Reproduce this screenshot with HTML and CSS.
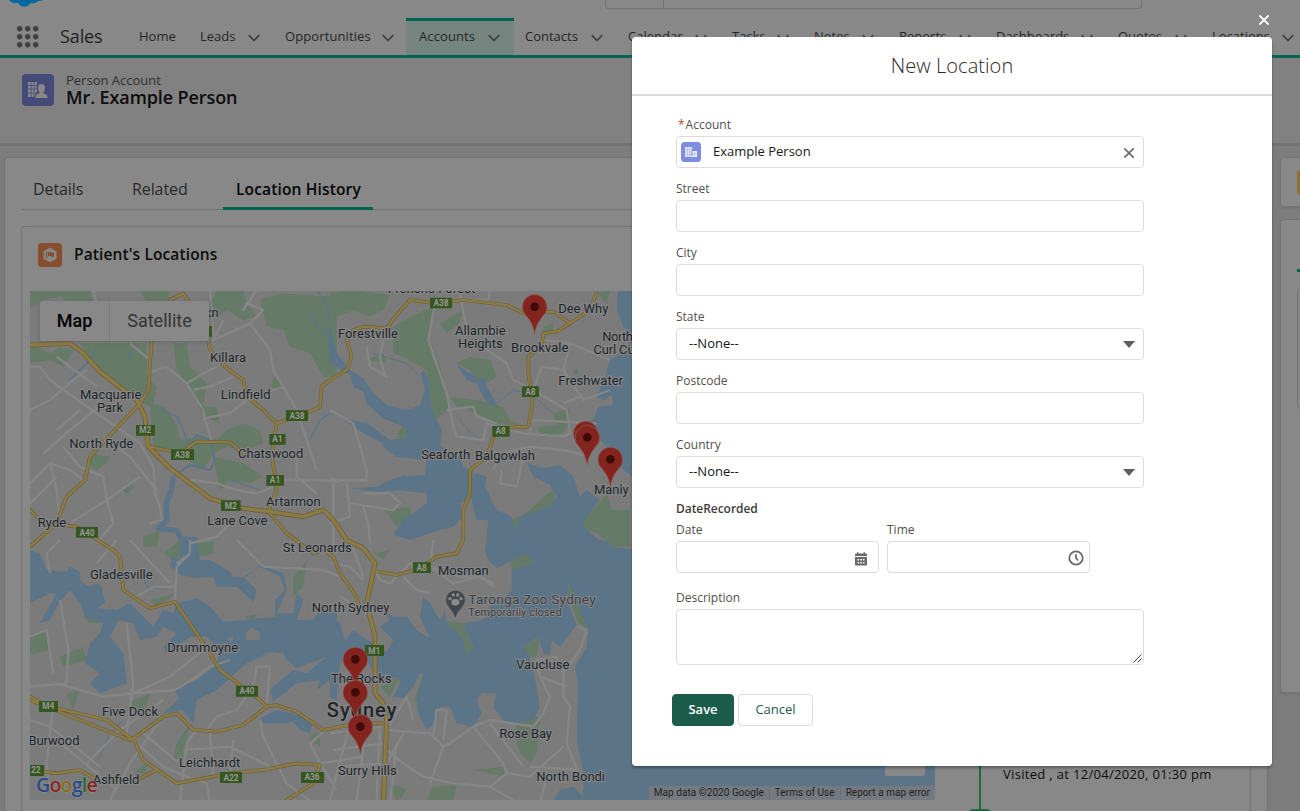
FILE: index.html
```html
<!DOCTYPE html>
<html lang="en">
<head>
<meta charset="utf-8">
<title>New Location</title>
<link rel="stylesheet" href="styles.css">
</head>
<body>
<svg width="0" height="0" class="defs">
  <symbol id="chev" viewBox="0 0 12 8"><path d="M.8 1.2 6 6.6l5.200-5.400" fill="none" stroke="currentColor" stroke-width="1.700"/></symbol>
  <symbol id="x" viewBox="0 0 12 12"><path d="M1.300 1.300l9.400 9.400M10.700 1.300l-9.400 9.400" fill="none" stroke="currentColor" stroke-width="1.800"/></symbol>
</svg>
<div class="app">
  <header class="top">
    <div class="utility">
      <svg class="cloud" width="36" height="8" viewBox="9 0 36 8"><path d="M9 0Q12 4 18 2.800Q20 7 25 6.800Q29 6 30 3.200Q36 4 38 1Q41 1 43 0Z" fill="#006a9e"/></svg>
      <div class="search"></div>
    </div>
    <nav class="nav">
      <svg class="waffle" width="22" height="22" viewBox="0 0 22 22" fill="#414141"><circle cx="2.700" cy="2.700" r="2.700"/><circle cx="10.700" cy="2.700" r="2.700"/><circle cx="18.700" cy="2.700" r="2.700"/><circle cx="2.700" cy="10.700" r="2.700"/><circle cx="10.700" cy="10.700" r="2.700"/><circle cx="18.700" cy="10.700" r="2.700"/><circle cx="2.700" cy="18.700" r="2.700"/><circle cx="10.700" cy="18.700" r="2.700"/><circle cx="18.700" cy="18.700" r="2.700"/></svg>
      <span class="appname">Sales</span>
      <div class="item home"><span>Home</span></div>
      <div class="item leads"><span>Leads</span><svg><use href="#chev"/></svg></div>
      <div class="item opps"><span>Opportunities</span><svg><use href="#chev"/></svg></div>
      <div class="item accounts"><span>Accounts</span><svg><use href="#chev"/></svg></div>
      <div class="item contacts"><span>Contacts</span><svg><use href="#chev"/></svg></div>
      <div class="item calendar"><span>Calendar</span><svg><use href="#chev"/></svg></div>
      <div class="item tasks"><span>Tasks</span><svg><use href="#chev"/></svg></div>
      <div class="item notes"><span>Notes</span><svg><use href="#chev"/></svg></div>
      <div class="item reports"><span>Reports</span><svg><use href="#chev"/></svg></div>
      <div class="item dashboards"><span>Dashboards</span><svg><use href="#chev"/></svg></div>
      <div class="item quotes"><span>Quotes</span><svg><use href="#chev"/></svg></div>
      <div class="item locations"><span>Locations</span><svg><use href="#chev"/></svg></div>
    </nav>
  </header>
  <section class="record">
    <svg width="32" height="32" viewBox="0 0 32 32"><rect width="32" height="32" rx="4" fill="#454b78"/><path d="M6 8h9v15H6z" fill="#888"/><path d="M9 8v15M12 8v15M6 11.500h9M6 15h9M6 19h9" stroke="#454b78" stroke-width=".8"/><path d="M12.500 25v-3q0-2 4-3.500-2-2-2-5 0-4.500 5-4.500t5 4.500q0 3-2 5 4 1.500 4 3.500v3z" fill="#454b78"/><path d="M13.500 24v-1.500q0-2 4.500-3.500-2-2-2-5 0-4 3.500-4t3.500 4q0 3-2 5 4.500 1.500 4.500 3.500V24z" fill="#888"/></svg>
    <div class="who"><div class="kind">Person Account</div><h1>Mr. Example Person</h1></div>
  </section>
  <main class="cols">
    <section class="card main">
      <div class="tabs"><span class="t1">Details</span><span class="t2">Related</span><span class="t3">Location History</span></div>
      <div class="panes">
        <section class="mapcard">
          <div class="maphead">
            <svg width="24" height="24" viewBox="0 0 24 24"><rect width="24" height="24" rx="3.500" fill="#864e2d"/><path d="M12 4.500l6.500 3.700v7.600L12 19.500l-6.500-3.700V8.200z" fill="#888"/><path d="M8.500 8.500v7" stroke="#864e2d" stroke-width="1.200"/><path d="M10 9h2.500l1 .8H16v4h-2.500l-1-.8H10z" fill="#864e2d"/></svg>
            <h2>Patient's Locations</h2>
          </div>
          <div class="map">
            <svg class="tiles" viewBox="0 3 2715 1527">
              <defs>
                <g id="pin"><path d="M0 0C-4-28-12-39-25-56A37 37 0 1 1 25-56C12-39 4-28 0 0Z" fill="#83241e" stroke="#94625c" stroke-width="2"/><circle cy="-84" r="13" fill="#3f0b0a"/></g>
                <path id="motorway" d="M0 165L120 160 160 190 210 245 320 330 345 380 355 470 420 535 540 625 640 655 720 665 820 680 880 660 910 690 950 750 1000 775 1035 820 1025 870 1010 940 1035 1040 1035 1210 1060 1240 1070 1290 1060 1540"/>
                <path id="arterial" d="M365 150L355 300 330 340 180 500 165 570 110 620 80 700 0 770M360 470L450 490 500 455 600 457 650 500M530 130L540 180 590 235 640 270 650 320 700 360 740 400 725 490 740 600 715 665M740 400L830 370 870 350 875 290 900 270 950 240 965 200 950 150 970 120 1000 110 1070 115 1095 80 1140 30 1220 40 1300 30 1430 45 1480 70 1570 65 1620 100 1680 60 1700 10M1620 100L1580 125 1540 130 1535 170 1495 200 1495 250 1508 340 1495 410 1400 415 1370 500 1320 540 1320 610 1300 660 1300 750 1280 790 1220 800 1170 835 1100 855 1045 845M720 670L770 730 850 790 880 780 910 800 930 850 980 920 985 940M0 660L40 700 140 710 250 780 270 800 280 900 360 955 435 935 520 1060 570 1140 690 1230 710 1250 740 1245 800 1265 880 1320 980 1300 1060 1300M420 30L460 10 480 40M710 1250L640 1305 560 1325 490 1320 440 1270 400 1280 310 1345 340 1410 440 1480 600 1450 700 1440 800 1420 870 1425 850 1480 770 1530M0 1220L60 1250 230 1290 310 1350M0 1230L100 1270 300 1350M0 1440L80 1450 150 1440 200 1470 320 1470 380 1440"/>
              </defs>
              <rect width="2715" height="1540" fill="#7b7b7b"/>
              <g fill="#667b67">
                <path d="M0 0H180L190 40 150 60 90 20 40 30 0 55ZM330 0H420L410 50 380 60 350 40ZM0 160L60 190 90 170 130 180 100 230 60 210 0 220ZM150 160L350 160 350 260 380 290 370 340 400 350 440 400 450 450 500 440 560 450 590 420 640 400 690 420 700 460 640 480 590 470 550 490 520 540 460 500 480 470 430 490 370 470 360 350 320 330 260 280 200 240ZM430 160L470 160 480 230 530 280 520 350 560 350 570 400 520 380 490 310 440 240ZM560 0L640 0 650 40 680 80 640 90 590 60 560 80 540 40ZM690 30L750 10 920 20 920 260 880 260 840 190 780 170 760 120 710 110ZM730 260L760 280 750 300 725 290ZM180 490L240 500 230 520 200 540 170 520ZM280 600L300 580 315 590 290 612ZM340 740L390 720 380 770 340 770ZM550 500L640 520 700 560 660 580 600 570 570 600ZM900 10L970 0 1080 15 1060 60 1020 80 970 60 920 80Z"/>
                <path d="M1090 110L1180 60 1210 50 1200 150 1230 230 1250 310 1260 350 1210 400 1200 340 1190 240 1120 200 1090 190ZM1230 100L1300 60 1290 100 1250 130ZM1280 220L1320 200 1380 210 1400 260 1350 290 1320 240ZM1260 320L1340 330 1420 350 1440 390 1480 410 1400 400 1340 370 1280 350ZM1120 400L1160 390 1180 430 1140 460 1100 440ZM1570 370L1620 355 1615 410 1580 410ZM1525 410L1610 405 1600 430 1530 440ZM1010 210L1060 190 1070 220ZM1060 660L1140 650 1150 690 1100 710 1080 680ZM1430 700L1500 660 1540 620 1570 600 1580 650 1520 670 1460 710 1455 730ZM1640 710L1690 660 1730 610 1745 660 1800 660 1800 770 1750 770 1700 730ZM1540 110L1570 100 1570 120 1540 130ZM1700 10L1740 0 1730 40ZM1630 240L1645 235 1645 250 1630 255Z"/>
                <path d="M0 1040L50 1020 60 1080 0 1095ZM90 1100L160 1070 170 1110 100 1130ZM160 980L220 970 210 1000 180 1000ZM110 1210L150 1200 130 1260ZM300 1235L360 1210 350 1250 310 1260ZM400 790L450 750 500 770 430 810ZM500 760L550 755 550 790 510 800ZM360 930L440 910 380 950ZM790 860L830 810 820 890 790 920ZM720 1050L790 1030 760 1070 730 1060ZM770 1100L820 1090 820 1110ZM640 980L690 970 660 990ZM440 1360L480 1300 460 1400 430 1410ZM310 1450L350 1420 350 1450ZM840 1330L870 1330 870 1370 840 1350ZM860 970L900 980 890 1030 860 1030ZM1030 790L1080 780 1060 810ZM1120 1020L1180 1010 1210 980 1240 990 1300 1000 1330 1080 1310 1100 1290 1040 1250 1000 1240 1000ZM1440 790L1520 790 1520 840 1450 880ZM1480 1070L1530 1040 1520 1100 1480 1110ZM1050 1190L1110 1160 1080 1220ZM1460 1290L1530 1280 1520 1390 1500 1420 1470 1390 1455 1340ZM1190 1530L1210 1490 1280 1485 1270 1530ZM1330 1440L1430 1430 1420 1460ZM1610 900L1620 880 1660 950 1670 1020 1640 990ZM1080 1480L1130 1500 1100 1540ZM1170 1180L1190 1170 1180 1230 1150 1240Z"/>
              </g>
              <g fill="#5b7487">
                <path d="M1765 0L1760 60 1780 110 1806 130 1790 180 1740 210 1725 260 1700 320 1720 330 1745 315 1750 345 1705 350 1690 390 1665 400 1700 440 1740 480 1770 530 1806 560 1840 620 1815 780 1750 770 1735 755 1700 745 1660 710 1670 680 1710 630 1670 600 1650 620 1630 560 1590 525 1540 535 1490 518 1510 560 1560 585 1580 620 1560 650 1510 665 1470 680 1455 720 1445 680 1400 660 1380 620 1365 590 1370 560 1335 550 1320 590 1325 630 1340 690 1375 690 1365 790 1375 810 1400 835 1450 810 1490 790 1510 820 1445 840 1445 900 1420 930 1380 950 1360 990 1300 1000 1330 1075 1310 1095 1295 1040 1250 1000 1245 960 1230 990 1200 940 1180 920 1170 980 1200 1045 1160 1020 1130 980 1090 980 1050 955 1080 990 1050 1010 1090 1050 1070 1085 1040 1080 1040 1180 1105 1160 1110 1180 1090 1220 1120 1225 1150 1190 1170 1150 1180 1150 1160 1230 1165 1270 1190 1320 1220 1290 1230 1250 1260 1250 1280 1300 1330 1310 1355 1270 1340 1230 1355 1210 1400 1210 1390 1250 1420 1290 1460 1300 1510 1290 1530 1250 1520 1190 1500 1100 1480 1070 1525 1040 1540 1090 1560 1095 1565 1050 1590 1070 1640 1005 1610 930 1615 880 1650 960 1675 1020 1670 1070 1635 1130 1645 1190 1640 1350 1660 1450 1660 1520 1630 1490 1590 1500 1565 1540 2715 1540V0Z"/>
                <path d="M895 120L900 110 920 190 960 240 1000 265 1030 310 1070 345 1130 360 1170 345 1185 300 1172 250 1180 240 1197 270 1200 340 1215 380 1235 420 1230 465 1260 490 1290 500 1300 530 1330 545 1330 620 1290 640 1300 680 1270 710 1230 720 1140 750 1090 735 1120 690 1190 640 1190 610 1100 600 1120 560 1185 555 1190 510 1100 500 1070 470 1130 445 1130 415 1060 385 1010 340 1000 305 970 290 960 255 900 220Z"/>
                <path d="M1280 225L1320 250 1350 270 1365 265 1370 290 1400 340 1400 350 1370 340 1340 280 1310 270Z"/>
                <path d="M930 380L1010 400 1080 450 1150 440 1190 470 1180 500 1080 490 1050 455 1000 430ZM960 595L1040 590 1080 570 1130 555 1110 600 1040 605Z"/>
                <path d="M0 780L30 790 50 840 110 845 120 830 150 845 150 870 175 890 205 880 215 890 225 940 200 955 260 960 300 940 340 980 370 1010 400 960 430 970 440 940 500 925 540 950 580 995 640 990 690 985 735 980 735 930 765 900 750 860 690 830 640 860 680 900 670 935 620 890 560 890 550 860 500 865 450 855 420 830 425 805 450 805 455 740 500 740 510 810 540 810 600 845 610 860 650 860 690 825 760 850 770 900 740 970 790 970 800 910 820 930 800 990 850 990 870 960 920 970 920 1130 890 1100 840 1120 800 1135 770 1110 760 1090 720 1085 650 1120 600 1165 560 1200 500 1230 490 1300 460 1260 400 1270 450 1225 430 1200 500 1170 560 1125 570 1080 530 1040 480 1040 410 1090 400 1070 440 1030 400 1010 380 1040 330 1050 310 1000 265 990 240 1040 280 1090 290 1180 210 1210 180 1180 210 1150 165 1120 180 1060 210 1030 220 1000 165 980 150 940 120 900 95 930 80 950 60 990 30 1000 80 910 60 910 0 940Z"/>
                <path d="M730 1235L800 1180 870 1170 860 1200 900 1170 920 1170 920 1120 890 1100 830 1150 790 1140 720 1200ZM690 1285L740 1260 790 1270 850 1290 840 1330 810 1320 790 1295 760 1300 700 1300Z"/>
                <path d="M900 975L930 1000 945 1050 970 1020 1010 1050 1040 1060V1160L1010 1110 960 1080 930 1120 920 1230 900 1220Z"/>
              </g>
              <g fill="#7b7b7b"><path d="M645 1030L665 1015 690 1025 690 1050 650 1050ZM590 1045L612 1040 605 1055Z"/></g>
              <g fill="none" stroke="#5b7487" stroke-width="13" stroke-linejoin="round">
                <path d="M430 560L425 600 408 640 412 690 385 715 440 722 460 760 458 790" stroke-width="16"/>
                <path d="M430 560L480 525 540 540 555 515 540 450 500 435 480 470" stroke-width="6"/>
                <path d="M480 470L455 410 440 380 380 350M840 70L860 110 900 130 910 200M120 270L190 200 200 170M310 170L300 200 280 215M840 450L870 390 900 370M600 570L690 600M900 100L890 40 860 0" stroke-width="4"/>
                <path d="M1030 190L1130 220 1170 260M1400 340L1450 300 1500 310 1570 370M1290 390L1320 430 1360 450M200 1420L240 1330 280 1290M410 900L350 890 340 860" stroke-width="3"/>
              </g>
              <g fill="none" stroke="#868686" stroke-width="7" stroke-linejoin="round">
                <path d="M190 0L200 40M0 230L30 230 60 270 200 370 330 460 370 530 375 610 390 650 395 690 360 700M0 360L60 330 130 270 170 240M80 200L200 290M80 420L150 360M0 580L60 520 120 540 160 570M40 490L120 420 220 340M0 640L80 560M120 700L230 630 330 560M60 520L80 600 90 700M220 440L300 500 380 600M100 470L150 530 220 560 230 630 250 700 200 760M350 250L410 230 470 280 520 360 525 390 545 450 550 460M470 280L540 240 560 230M490 300L540 290 610 260M540 0L545 60 550 150 660 100 700 60 650 40 640 60 680 0M550 150L580 90M300 160L360 210M660 100L720 180 730 240 800 360 830 450 860 540M520 385L600 370 650 330 760 290M480 570L560 580 620 600 680 610 730 590M760 570L860 570 930 575M800 490L800 560 860 610M600 700L560 740 480 760 480 780"/>
                <path d="M1213 50L1195 150 1250 310 1270 410 1280 440 1360 450 1370 400M1010 170L1020 230 1070 260 1060 240 1050 200 1060 150M1290 0L1300 70 1310 110M1380 0L1375 30 1320 30M1370 180L1430 220 1450 270 1510 300 1610 360 1620 430 1600 440 1480 430 1370 400M1510 300L1535 230 1600 240 1660 330 1740 300M1600 240L1620 160 1740 210M1620 160L1540 150M1600 340L1650 320M1390 540L1410 490 1500 470 1600 480 1680 500M1415 540L1410 580 1460 590 1480 500M900 360L970 400 1010 540 1010 570 900 570M910 570V780M950 575L960 680 900 700M960 640L1090 660 1110 640 1080 610 1000 610M1000 650L1015 700 1020 760M1210 750L1200 830 1290 860 1350 860 1390 890M1250 360L1330 350 1340 380 1400 400M1500 430L1500 390 1700 400"/>
                <path d="M480 750L480 790 440 830 435 930M440 890L370 890 320 920M300 750L420 880M200 820L260 750M90 750L50 790 60 850M90 930L115 1080 110 1180 0 1190M290 1000L310 1180 290 1330 300 1350M0 1040L50 1020 70 1150M80 1180L220 1220 310 1210 435 1200 500 1160 540 1130 600 1110M310 1210L420 1160 520 1080M70 1240L50 1420 60 1500M80 1350L260 1500M0 1290L60 1310 160 1390 210 1430M170 1420L270 1320 400 1230M310 1350L400 1430 470 1460 530 1480 540 1540M390 1290L300 1420 240 1530M340 1330L460 1430M500 1320L470 1360 450 1540M530 1320L560 1280 620 1260 670 1190 680 1130 720 1130 710 1240M540 1330L550 1460M460 1380L600 1370 720 1430M610 1350L600 1470M690 1290L700 1340 770 1480 850 1540M840 1360L870 1420 920 1500M840 1360L900 1310M620 750L660 790 700 830 880 840 930 860M480 790L440 820"/>
                <path d="M960 750L1000 860M900 820L960 830 1000 870M1000 960L930 920M1010 780L1050 870 1080 880 1140 820 1200 830 1270 880 1350 860 1390 880M1120 860L1160 900 1200 910M1070 1320L1200 1330 1240 1370 1260 1360 1330 1310 1380 1290 1510 1310 1540 1270 1560 1220 1530 1160 1520 1110 1580 1100 1600 1150 1650 1080 1670 1020 1640 1010M1600 1150L1600 1220 1620 1250 1610 1360 1650 1460M1530 1160L1610 1190M1330 1310L1420 1420 1430 1450 1500 1460 1600 1370M1430 1450L1380 1490 1270 1480 1180 1460 1120 1420 1070 1380M1240 1370L1200 1480M1120 1330L1070 1420M1070 1320L1130 1220 1150 1290M1500 1430L1650 1440M1380 1490L1450 1530M900 1330L1060 1310M910 1380L1060 1360M930 1430L1060 1420M1010 1300L980 1530M1050 1300L1040 1530M960 1300L900 1530M1100 1360L1080 1540M870 1420L1000 1400M1240 1350L1250 1260 1220 1260 1210 1340M1480 1430L1380 1300M1550 1460L1530 1540"/>
              </g>
              <g fill="none" stroke-linejoin="round" stroke-linecap="round">
                <g stroke="#6e6138"><use href="#motorway" stroke-width="15"/><use href="#arterial" stroke-width="11"/></g>
                <g stroke="#8c7b46"><use href="#motorway" stroke-width="10"/><use href="#arterial" stroke-width="7"/></g>
              </g>
              <g fill="#35561f">
                <path d="M318 405h57v32h-57zM423 478h69v32h-69zM768 361h66v32h-66zM718 432h49v32h-49zM709 555h53v32h-53zM573 631h59v32h-59zM138 711h66v32h-66zM500 108h46v32h-46zM1200 23h66v32h-66zM1476 289h51v32h-51zM1387 408h52v32h-52zM1149 817h54v32h-54zM1005 1065h57v33h-57zM618 1187h66v33h-66zM27 1233h57v33h-57zM0 1425h42v33H0zM570 1446h66v33h-66zM813 1446h69v33h-69z"/>
              </g>
              <g class="shield">
                <text x="346" y="430">M2</text><text x="457" y="503">A38</text><text x="801" y="386">A38</text><text x="742" y="457">A1</text><text x="735" y="580">A1</text><text x="602" y="657">M2</text><text x="171" y="737">A40</text><text x="1233" y="48">A38</text><text x="1501" y="314">A8</text><text x="1412" y="433">A8</text><text x="1175" y="842">A8</text><text x="1033" y="1091">M1</text><text x="651" y="1212">A40</text><text x="55" y="1258">M4</text><text x="17" y="1450">22</text><text x="603" y="1472">A22</text><text x="846" y="1469">A36</text>
              </g>
              <g class="place">
                <text x="549" y="82" textLength="34">on</text><text x="594" y="217" textLength="108">Killara</text><text x="242" y="328" textLength="184">Macquarie</text><text x="240" y="367" textLength="78">Park</text><text x="647" y="326" textLength="149">Lindfield</text><text x="214" y="475" textLength="192">North Ryde</text><text x="722" y="505" textLength="196">Chatswood</text><text x="790" y="647" textLength="164">Artarmon</text><text x="622" y="704" textLength="181">Lane Cove</text><text x="66" y="711" textLength="85">Ryde</text>
                <text x="1205" y="10" textLength="262">Frenchs Forest</text><text x="1014" y="143" textLength="180">Forestville</text><text x="1351" y="134" textLength="152">Allambie</text><text x="1351" y="173" textLength="134">Heights</text><text x="1529" y="185" textLength="172">Brookvale</text><text x="1660" y="68" textLength="150">Dee Why</text><text x="1763" y="154" textLength="92">North</text><text x="1763" y="193" textLength="145">Curl Curl</text><text x="1682" y="284" textLength="194">Freshwater</text><text x="1247" y="506" textLength="147">Seaforth</text><text x="1425" y="511" textLength="180">Balgowlah</text><text x="1744" y="611" textLength="104">Manly</text>
                <text x="274" y="866" textLength="188">Gladesville</text><text x="862" y="787" textLength="207">St Leonards</text><text x="962" y="965" textLength="233">North Sydney</text><text x="518" y="1086" textLength="213">Drummoyne</text><text x="300" y="1277" textLength="168">Five Dock</text><text x="72" y="1365" textLength="153">Burwood</text><text x="539" y="1430" textLength="184">Leichhardt</text><text x="258" y="1482" textLength="140">Ashfield</text><text x="1300" y="854" textLength="152">Mosman</text><text x="994" y="1178" textLength="182">The Rocks</text><text x="1538" y="1137" textLength="160">Vaucluse</text><text x="1487" y="1343" textLength="158">Rose Bay</text><text x="1012" y="1454" textLength="176">Surry Hills</text><text x="1622" y="1472" textLength="206">North Bondi</text>
                <text class="city" x="995" y="1281" textLength="209">Sydney</text>
              </g>
              <g class="poi"><path d="M1276 984C1270 960 1248 950 1248 930A28 28 0 0 1 1305 930C1305 950 1282 960 1276 984Z" fill="#42464d"/><g fill="#8a8a8a"><ellipse cx="1276" cy="937" rx="12" ry="10"/><circle cx="1260" cy="926" r="5"/><circle cx="1270" cy="915" r="5"/><circle cx="1283" cy="915" r="5"/><circle cx="1293" cy="926" r="5"/></g><text x="1315" y="943" textLength="382">Taronga Zoo Sydney</text><text class="small" x="1315" y="977" textLength="280">Temporarily closed</text></g>
              <use href="#pin" x="1514" y="134"/><use href="#pin" x="1667" y="514"/><use href="#pin" x="1672" y="526"/><use href="#pin" x="1741" y="592"/><use href="#pin" x="976" y="1192"/><use href="#pin" x="976" y="1291"/><use href="#pin" x="991" y="1394"/>
              <text class="google" x="18" y="1507"><tspan fill="#264a85">G</tspan><tspan fill="#852720">o</tspan><tspan fill="#867015">o</tspan><tspan fill="#264a85">g</tspan><tspan fill="#236b38">l</tspan><tspan fill="#852720">e</tspan></text>
            </svg>
            <div class="maptype"><span class="on">Map</span><span>Satellite</span></div>
            <div class="zoomctl"></div>
            <div class="attrib"><span>Map data ©2020 Google</span><span>Terms of Use</span><span>Report a map error</span></div>
          </div>
        </section>
        <section class="timeline"><div class="track"><i></i></div><p>Visited , at 12/04/2020, 01:30 pm</p></section>
      </div>
    </section>
    <aside class="side">
      <div class="card s1"><i></i></div>
      <div class="card s2"><i></i><b></b></div>
    </aside>
  </main>
</div>
<div class="layer">
  <svg class="close"><use href="#x"/></svg>
  <section class="modal">
    <h2 class="mtitle">New Location</h2>
    <form class="form">
      <label class="req"><em>*</em>Account</label>
      <div class="box lookup">
        <svg width="20" height="20" viewBox="0 0 20 20"><rect width="20" height="20" rx="3.500" fill="#7f8de1"/><path d="M4 5h7v10H4zM11 9h5v6h-5z" fill="#e8ebfb"/><path d="M6.300 5v10M8.700 5v10M4 7.500h7M4 10h7M4 12.500h7M13.500 10V14M11 12h5" stroke="#a6b0ea" stroke-width=".6"/><path d="M10.800 8.500V14" stroke="#7f8de1"/></svg>
        <span>Example Person</span><svg class="clear"><use href="#x"/></svg>
      </div>
      <label>Street</label><div class="box"></div>
      <label>City</label><div class="box"></div>
      <label>State</label><div class="box select"><span>--None--</span><i></i></div>
      <label>Postcode</label><div class="box"></div>
      <label>Country</label><div class="box select"><span>--None--</span><i></i></div>
      <div class="legend">DateRecorded</div>
      <div class="pair">
        <div><label>Date</label><div class="box cal"><svg width="12" height="14" viewBox="0 0 12 14"><path d="M0 2.500Q0 1.500 1 1.500H2V.3h1.500v1.200h5V.3H10v1.200h1q1 0 1 1V4H0zM0 5h12v7.500q0 1-1 1H1q-1 0-1-1z" fill="#6b6967"/><path d="M2.500 7h1.600v1.600H2.500zM5.200 7h1.600v1.600H5.200zM7.900 7h1.600v1.600H7.900zM2.500 10h1.600v1.600H2.500zM5.200 10h1.600v1.600H5.200zM7.900 10h1.600v1.600H7.900z" fill="#fff"/></svg></div></div>
        <div><label>Time</label><div class="box clock"><svg width="16" height="16" viewBox="0 0 16 16" fill="none" stroke="#6b6967" stroke-width="1.800"><circle cx="8" cy="8" r="6.700"/><path d="M8 4.200V8l2 2.500"/></svg></div></div>
      </div>
      <label class="desc">Description</label>
      <div class="box area"><svg width="9" height="9" viewBox="0 0 9 9" stroke="#444" stroke-width="1"><path d="M.5 8.500l8-8M4.500 8.500l4-4"/></svg></div>
      <div class="actions"><button type="button" class="save">Save</button><button type="button" class="cancel">Cancel</button></div>
    </form>
  </section>
</div>
</body>
</html>
```
FILE: styles.css
```css
* { box-sizing: border-box; }
body { margin: 0; width: 1300px; height: 811px; overflow: hidden; position: relative; background: #7d7d7d; font: 13px "Open Sans", "Noto Sans", sans-serif; color: #0c0c0c; }
h1, h2, p { margin: 0; }
.defs { position: absolute; }
.app { width: 1300px; height: 811px; overflow: hidden; }
.top { height: 58px; background: #888; border-bottom: 3px solid #006453; }
.utility { height: 18px; display: flex; padding-left: 9px; }
.cloud { flex: none; }
.search { width: 537px; height: 9px; margin-left: 560px; border: 1px solid #737373; border-top: 0; border-radius: 0 0 4px 4px; background: linear-gradient(#737373, #737373) 57px 0 / 1px 100% no-repeat; }
.nav { height: 37px; display: flex; align-items: center; }
.waffle { flex: none; margin-left: 17px; }
.appname { flex: none; width: 79px; margin: 0 0 1px 21px; font-size: 18px; color: #1f1f1f; letter-spacing: -.1px; }
.item { flex: none; height: 37px; display: flex; align-items: center; justify-content: space-between; padding-right: 25px; color: #262626; }
.item span { padding-bottom: 2px; }
.item svg { width: 12px; height: 8px; color: #414141; margin-top: 2px; }
.home { width: 61px; }
.leads { width: 85px; }
.opps { width: 121px; padding-right: 12px; letter-spacing: .1px; }
.accounts { width: 108px; padding: 0 14px 3px 13px; background: #76857f; border-top: 3px solid #006453; letter-spacing: .1px; }
.contacts { width: 114px; padding-left: 11px; }
.calendar { width: 104px; }
.tasks { width: 82px; }
.notes { width: 85px; }
.reports { width: 97px; }
.dashboards { width: 122px; }
.quotes { width: 94px; }
.locations { width: 107px; }
.record { height: 88px; display: flex; padding: 16px 22px; background: #818181; border-bottom: 3px solid #737373; }
.who { margin: -1px 0 0 12px; }
.kind { font-size: 13px; line-height: 14px; color: #2f2f2f; }
.record h1 { font-size: 18px; line-height: 20px; font-weight: 600; letter-spacing: -.1px; }
.cols { display: flex; gap: 12px; padding: 11px 0 0 4px; height: 665px; }
.card { background: #888; border: 1px solid #737373; border-radius: 4px; box-shadow: 0 2px 2px #747474; }
.main { flex: none; width: 1264px; height: 680px; padding: 12px 16px; }
.tabs { height: 40px; display: flex; border-bottom: 1px solid #737373; font-size: 16px; line-height: 39px; color: #292929; }
.t1 { width: 111px; padding-left: 12px; letter-spacing: -.1px; }
.t2 { width: 91px; letter-spacing: -.1px; }
.t3 { width: 150px; height: 40px; padding-left: 13px; font-weight: 600; color: #050505; border-bottom: 3px solid #006453; white-space: nowrap; font-size: 15.500px; letter-spacing: .15px; }
.panes { display: flex; margin-top: 16px; gap: 14px; }
.mapcard { flex: none; width: 922px; height: 620px; border: 1px solid #737373; border-right-color: transparent; border-radius: 4px; padding: 0 8px; }
.maphead { height: 64px; display: flex; align-items: center; padding: 0 8px 8px; gap: 12px; }
.maphead h2 { font-size: 15.500px; font-weight: 600; letter-spacing: .12px; padding-bottom: 2px; }
.map { position: relative; width: 905px; height: 509px; overflow: hidden; font-family: Roboto, sans-serif; }
.tiles { display: block; width: 905px; height: 509px; }
.place text { font: 400 39px Roboto, sans-serif; fill: #20252c; stroke: #858585; stroke-width: 7px; paint-order: stroke; text-anchor: middle; }
.place .city { font-size: 60px; font-weight: 500; }
.shield text { font: 700 25px Roboto, sans-serif; fill: #969696; text-anchor: middle; }
.poi text { font: 400 41px Roboto, sans-serif; fill: #3d4249; stroke: #858585; stroke-width: 6px; paint-order: stroke; }
.poi .small { font-size: 33px; }
.google { font: 600 59px "Open Sans", sans-serif; letter-spacing: -2.5px; stroke: #929292; stroke-width: 3px; paint-order: stroke; }
.maptype { position: absolute; left: 10px; top: 10px; display: flex; width: 169px; height: 40px; background: #888; border-radius: 2px; box-shadow: 0 1px 4px #5557; font-size: 18px; line-height: 40px; color: #343434; text-align: center; }
.maptype span { flex: 1; }
.maptype .on { flex: 0 0 70px; font-weight: 500; color: #000; border-right: 1px solid #7b7b7b; }
.zoomctl { position: absolute; right: 10px; bottom: 24px; width: 40px; height: 81px; background: #888; border-radius: 2px; }
.attrib { position: absolute; right: 0; bottom: 0; height: 14px; display: flex; gap: 1px; font-size: 10px; line-height: 14px; color: #222; letter-spacing: .05px; }
.attrib span { background: #747a7f; padding: 0 5px; white-space: nowrap; }
.timeline { width: 294px; height: 620px; border-right: 1px solid #737373; display: flex; padding-left: 22px; }
.track { width: 2px; height: 584px; background: #1f6b38; flex: none; }
.track i { display: block; width: 22px; height: 22px; margin: 583px 0 0 -10px; border-radius: 4px; background: #1f6b38; }
.timeline p { margin: 538px 0 0 22px; font-size: 13px; line-height: 20px; white-space: nowrap; letter-spacing: .32px; }
.side { width: 40px; flex: none; display: flex; flex-direction: column; gap: 12px; }
.side .card { flex: none; overflow: hidden; }
.s1 { height: 50px; padding: 12px 0 0 16px; }
.s1 i { display: block; width: 24px; height: 24px; background: #8a712f; border-radius: 3px 0 0 3px; }
.s2 { height: 474px; padding: 49px 0 0 16px; }
.s2 i { display: block; height: 3px; background: #006453; }
.s2 b { display: block; height: 121px; margin-top: 16px; border: 1px solid #737373; border-radius: 4px; }
.layer { position: absolute; inset: 0; padding: 37px 28px 0 632px; }
.close { position: absolute; left: 1258px; top: 14px; width: 12px; height: 12px; color: #fff; }
.modal { width: 640px; height: 729px; background: #fff; border-radius: 4px; box-shadow: 0 2px 3px #0005; }
.mtitle { height: 59px; border-bottom: 2px solid #dddbda; font-weight: 300; font-size: 20px; line-height: 57px; text-align: center; color: #2b2826; letter-spacing: .05px; }
.form { padding: 20px 128px 0 44px; color: #181818; }
.form label { display: block; height: 20px; font-size: 12px; line-height: 18px; color: #514f4d; }
.form .req { padding-left: 2px; }
.req em { color: #c23934; font-style: normal; margin-right: 1px; }
.box { height: 32px; margin-bottom: 12px; border: 1px solid #dddbda; border-radius: 4px; display: flex; align-items: center; background: #fff; }
.box span { padding-bottom: 2px; }
.lookup { padding: 0 8px 0 4px; }
.lookup span { flex: 1; margin-left: 12px; }
.clear { width: 12px; height: 12px; color: #706e6b; margin-top: 2px; }
.select { justify-content: space-between; padding: 0 8px 0 12px; }
.select i { border: 6px solid transparent; border-top: 7px solid #5f5d5b; border-bottom: 0; margin-top: 1px; }
.legend { font-size: 12px; font-weight: 600; line-height: 18px; height: 21px; color: #3e3e3c; letter-spacing: -.05px; }
.pair { display: flex; gap: 8px; }
.pair > div { width: 203px; }
.cal, .clock { justify-content: flex-end; padding-right: 11px; }
.cal svg { margin-top: 4px; }
.clock { padding-right: 5px; }
.clock svg { margin-top: 2px; }
.form .desc { margin-top: 4px; }
.area { height: 56px; align-items: flex-end; justify-content: flex-end; padding: 0 1px 1px 0; }
.actions { display: flex; gap: 4px; margin: 29px 0 0 -4px; }
.actions button { height: 32px; font: 13px "Open Sans", sans-serif; border-radius: 4px; padding: 0 0 2px; border: 1px solid #dddbda; background: #fff; color: #1c5c4b; width: 75px; }
.actions .save { width: 62px; background: #1c5c4b; border-color: #1c5c4b; color: #fff; font-weight: 600; }
```
